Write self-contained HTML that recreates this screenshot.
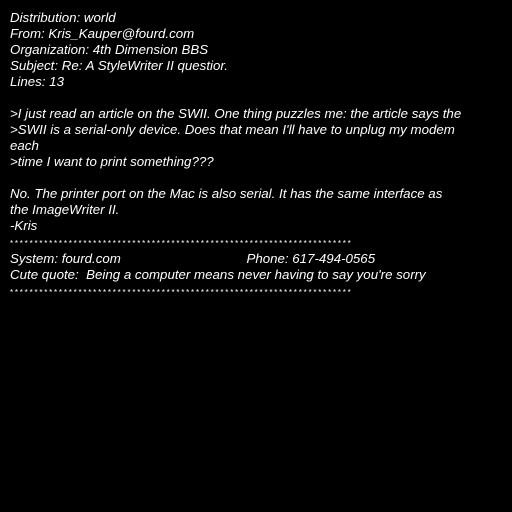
<!DOCTYPE html>
<html><head><style>
html,body{margin:0;padding:0;background:#000;width:512px;height:512px;overflow:hidden}
.t{position:absolute;left:10px;top:10px;font-family:"Liberation Sans",sans-serif;font-style:italic;font-size:13.3px;line-height:16px;color:#fff;white-space:pre}
.s{font-size:8px;letter-spacing:1.78px;display:inline-block;height:16px;line-height:18px;font-style:normal}
</style></head><body>
<div class="t">Distribution: world
From: Kris_Kauper@fourd.com
Organization: 4th Dimension BBS
Subject: Re: A StyleWriter II questior.
Lines: 13

&gt;I just read an article on the SWII. One thing puzzles me: the article says the
&gt;SWII is a serial-only device. Does that mean I'll have to unplug my modem
each
&gt;time I want to print something???

No. The printer port on the Mac is also serial. It has the same interface as
the ImageWriter II.
-Kris
<span class="s">**********************************************************************</span>
System: fourd.com                                  Phone: 617-494-0565
Cute quote:  Being a computer means never having to say you're sorry
<span class="s">**********************************************************************</span></div>
</body></html>
